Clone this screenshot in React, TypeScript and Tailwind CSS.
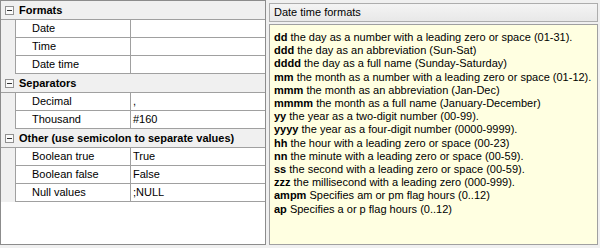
const font = { fontFamily: '"Liberation Sans", Arial, sans-serif' };

type Item = { label: string; value: string };
type Category = { title: string; items: Item[] };

const categories: Category[] = [
  {
    title: "Formats",
    items: [
      { label: "Date", value: "" },
      { label: "Time", value: "" },
      { label: "Date time", value: "" },
    ],
  },
  {
    title: "Separators",
    items: [
      { label: "Decimal", value: "," },
      { label: "Thousand", value: "#160" },
    ],
  },
  {
    title: "Other (use semicolon to separate values)",
    items: [
      { label: "Boolean true", value: "True" },
      { label: "Boolean false", value: "False" },
      { label: "Null values", value: ";NULL" },
    ],
  },
];

const formats: [string, string][] = [
  ["dd", "the day as a number with a leading zero or space (01-31)."],
  ["ddd", "the day as an abbreviation (Sun-Sat)"],
  ["dddd", "the day as a full name (Sunday-Saturday)"],
  ["mm", "the month as a number with a leading zero or space (01-12)."],
  ["mmm", "the month as an abbreviation (Jan-Dec)"],
  ["mmmm", "the month as a full name (January-December)"],
  ["yy", "the year as a two-digit number (00-99)."],
  ["yyyy", "the year as a four-digit number (0000-9999)."],
  ["hh", "the hour with a leading zero or space (00-23)"],
  ["nn", "the minute with a leading zero or space (00-59)."],
  ["ss", "the second with a leading zero or space (00-59)."],
  ["zzz", "the millisecond with a leading zero (000-999)."],
  ["ampm", "Specifies am or pm flag hours (0..12)"],
  ["ap", "Specifies a or p flag hours (0..12)"],
];

const MinusBox = () => (
  <div className="w-[9px] h-[9px] border border-[#919191] bg-[#fafafa] flex items-center justify-center shrink-0">
    <div className="w-[5px] h-px bg-[#333]" />
  </div>
);

const PropertyGrid = () => (
  <div className="w-[266px] h-[245px] border border-[#8c8c8c] bg-white flex flex-col shrink-0">
    {categories.map((cat) => (
      <div key={cat.title} className="flex flex-col">
        <div className="h-[19px] bg-[#f0f0f0] border-b border-[#a0a0a0] flex items-center pl-[4px] gap-[5px]">
          <MinusBox />
          <span className="text-[11px] font-bold text-black leading-none pt-px">{cat.title}</span>
        </div>
        {cat.items.map((item) => (
          <div key={item.label} className="h-[18px] flex">
            <div className="w-[14px] bg-[#f0f0f0] shrink-0" />
            <div className="flex-1 flex border-l border-b border-[#a0a0a0]">
              <div className="w-[115px] border-r border-[#a0a0a0] pl-[16px] flex items-center text-[11px] text-black">
                {item.label}
              </div>
              <div className="flex-1 pl-[2px] flex items-center text-[11px] text-black">{item.value}</div>
            </div>
          </div>
        ))}
      </div>
    ))}
  </div>
);

const FormatHelp = () => (
  <div className="flex-1 flex flex-col gap-[2px] pt-[3px] pr-[2px]">
    <div className="h-[19px] border border-[#adadad] bg-gradient-to-b from-[#f4f4f4] to-[#e8e8e8] flex items-center pl-[4px] text-[11px] text-black">
      Date time formats
    </div>
    <div className="h-[221px] border border-[#a0a0a0] bg-[#ffffe1] pl-[4px] pt-[6px] flex flex-col text-[11px] leading-[13.2px] text-black">
      {formats.map(([code, text]) => (
        <div key={code} className="whitespace-nowrap">
          <b>{code}</b> {text}
        </div>
      ))}
    </div>
  </div>
);

export default function App() {
  return (
    <div className="w-[600px] h-[248px] bg-[#f0f0f0] flex gap-[3px] overflow-hidden" style={font}>
      <PropertyGrid />
      <FormatHelp />
    </div>
  );
}
